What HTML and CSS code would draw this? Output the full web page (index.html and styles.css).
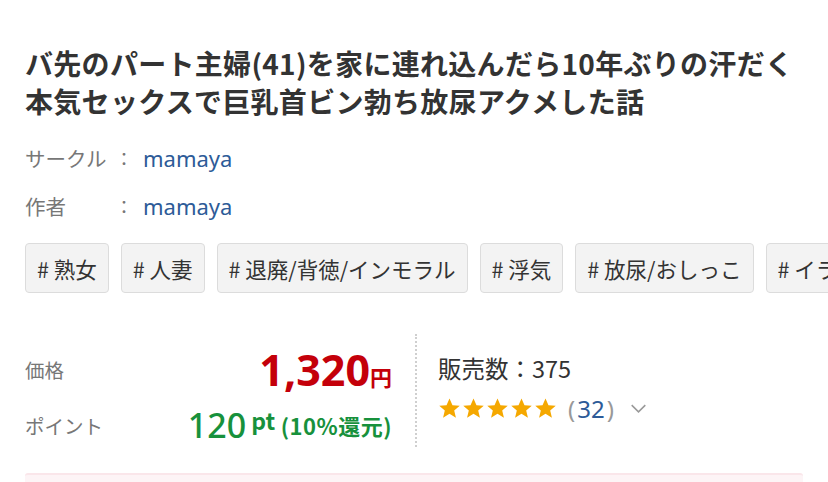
FILE: index.html
```html
<!DOCTYPE html>
<html lang="ja">
<head>
  <meta charset="UTF-8" />
  <meta name="viewport" content="width=device-width, initial-scale=1.0"/>
  <title>作品詳細</title>
  <link rel="stylesheet" href="styles.css">
</head>
<body>

  <h1 class="title">バ先のパート主婦(41)を家に連れ込んだら10年ぶりの汗だく本気セックスで巨乳首ビン勃ち放尿アクメした話</h1>

  <div class="meta">
    <div class="meta-row">
      <span class="meta-label">サークル</span>
      <span class="meta-colon">：</span>
      <a class="meta-link" href="#">mamaya</a>
    </div>
    <div class="meta-row">
      <span class="meta-label">作者</span>
      <span class="meta-colon">：</span>
      <a class="meta-link" href="#">mamaya</a>
    </div>
  </div>

  <div class="tags">
    <a class="tag" href="#"># 熟女</a>
    <a class="tag" href="#"># 人妻</a>
    <a class="tag" href="#"># 退廃/背徳/インモラル</a>
    <a class="tag" href="#"># 浮気</a>
    <a class="tag" href="#"># 放尿/おしっこ</a>
    <a class="tag" href="#"># イラマチオ</a>
  </div>

  <div class="price-box">
    <div class="price-left">
      <div class="price-row">
        <span class="price-label">価格</span>
        <span class="price"><span class="price-num">1,320</span><span class="price-yen">円</span></span>
      </div>
      <div class="price-row">
        <span class="price-label">ポイント</span>
        <span class="point"><span class="point-num">120</span><span class="point-unit">pt</span> <span class="point-rate">(10%還元)</span></span>
      </div>
    </div>
    <div class="price-right">
      <div class="sales">販売数：375</div>
      <div class="rating">
        <span class="stars">
          <svg viewBox="0 0 24 24"><path d="M12 1.5l3.1 7.1 7.6.6-5.8 5 1.8 7.4L12 17.6l-6.7 4 1.8-7.4-5.8-5 7.6-.6z"/></svg>
          <svg viewBox="0 0 24 24"><path d="M12 1.5l3.1 7.1 7.6.6-5.8 5 1.8 7.4L12 17.6l-6.7 4 1.8-7.4-5.8-5 7.6-.6z"/></svg>
          <svg viewBox="0 0 24 24"><path d="M12 1.5l3.1 7.1 7.6.6-5.8 5 1.8 7.4L12 17.6l-6.7 4 1.8-7.4-5.8-5 7.6-.6z"/></svg>
          <svg viewBox="0 0 24 24"><path d="M12 1.5l3.1 7.1 7.6.6-5.8 5 1.8 7.4L12 17.6l-6.7 4 1.8-7.4-5.8-5 7.6-.6z"/></svg>
          <svg viewBox="0 0 24 24"><path d="M12 1.5l3.1 7.1 7.6.6-5.8 5 1.8 7.4L12 17.6l-6.7 4 1.8-7.4-5.8-5 7.6-.6z"/></svg>
        </span>
        <span class="count"><span class="paren">(</span><a href="#">32</a><span class="paren">)</span></span>
        <svg class="chevron" viewBox="0 0 20 12"><path d="M2 2l8 8 8-8"/></svg>
      </div>
    </div>
  </div>

  <div class="notice"></div>

</body>
</html>
```

FILE: styles.css
```css
body { margin: 0; padding: 0 25px; background: #fff; color: #333; font-family: "Noto Sans CJK JP", "Noto Sans", sans-serif; overflow: hidden; height: 482px; }
a { text-decoration: none; }

.title { margin: 0; padding-top: 44px; font-size: 28px; line-height: 38px; font-weight: 700; color: #333; letter-spacing: 0.3px; }

.meta { margin-top: 14px; }
.meta-row { display: flex; align-items: center; height: 48px; font-size: 20.5px; }
.meta-label { width: 90px; color: #777; }
.meta-colon { width: 28px; color: #777; font-size: 18px; }
.meta-link { color: #2d5b98; font-family: "Noto Sans", sans-serif; font-size: 22px; }

.tags { display: flex; gap: 12px; margin-top: 13px; white-space: nowrap; margin-right: -25px; overflow: hidden; }
.tag { flex: none; display: flex; align-items: center; height: 48px; padding: 0 11px; background: #f3f3f3; border: 1.5px solid #dcdcdc; border-radius: 4px; color: #333; font-size: 21.5px; }

.price-box { display: flex; align-items: flex-start; margin-top: 41px; height: 113px; }
.price-left { width: 367px; padding-top: 7px; }
.price-row { display: flex; align-items: center; justify-content: space-between; height: 56px; }
.price-label { color: #777; font-size: 19.5px; }
.price { color: #c4000a; font-weight: 700; font-family: "Noto Sans", sans-serif; }
.price-num { font-size: 43px; }
.price-yen { font-size: 22px; font-family: "Noto Sans CJK JP", sans-serif; }
.point { color: #17913c; font-weight: 700; }
.point-num { font-size: 34px; font-weight: 500; font-family: "Noto Sans", sans-serif; letter-spacing: 0; }
.point-unit { margin-left: 5px; font-size: 23px; vertical-align: 8px; }
.point-rate { margin-left: 2px; font-size: 22px; letter-spacing: 0.5px; vertical-align: 3px; }

.price-right { margin-left: 23px; height: 113px; padding-left: 21px; border-left: 2px dotted #cfcfcf; }
.sales { margin-top: 17px; font-size: 23.5px; color: #333; }
.rating { display: flex; align-items: center; margin-top: 8px; height: 30px; }
.stars { display: flex; gap: 1px; }
.stars svg { width: 23px; height: 23px; fill: #f5a800; }
.count { margin-left: 11px; font-size: 24px; font-family: "Noto Sans", sans-serif; }
.paren { color: #999; }
.count a { color: #2d5b98; margin: 0 2px; }
.chevron { width: 17px; height: 11px; margin-left: 16px; fill: none; stroke: #999; stroke-width: 1.8; }

.notice { margin-top: 26px; height: 30px; border-top: 2px solid #fae6ea; background: #fdf4f6; border-radius: 3px; }
```
